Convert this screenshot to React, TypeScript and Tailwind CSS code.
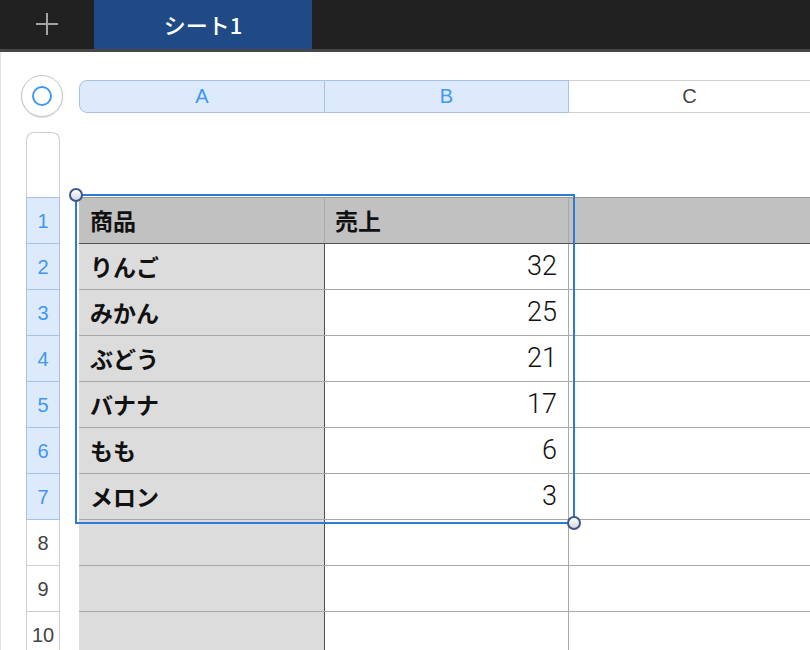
type Row = { n: number; name: string; value: string };

const rows: Row[] = [
  { n: 2, name: "りんご", value: "32" },
  { n: 3, name: "みかん", value: "25" },
  { n: 4, name: "ぶどう", value: "21" },
  { n: 5, name: "バナナ", value: "17" },
  { n: 6, name: "もも", value: "6" },
  { n: 7, name: "メロン", value: "3" },
  { n: 8, name: "", value: "" },
  { n: 9, name: "", value: "" },
  { n: 10, name: "", value: "" },
];

function RowHeader({ n }: { n: number }) {
  const selected = n <= 7;
  return (
    <div
      className={`h-[46px] shrink-0 flex items-center justify-center border-x border-b text-[20px] ${
        selected
          ? "bg-[#dceafb] border-[#a9c0de] text-[#3f98f2]"
          : "bg-white border-[#cfcfcf] text-[#444]"
      }`}
    >
      {n}
    </div>
  );
}

export default function App() {
  return (
    <div className="h-[650px] w-[810px] overflow-hidden bg-white font-['Liberation_Sans','Noto_Sans_CJK_JP',sans-serif]">
      {/* sheet tabs */}
      <div className="flex h-[52px] bg-[#212121] border-b-[3px] border-[#474747]">
        <div className="w-[94px] flex items-center justify-center pb-[2px]">
          <svg width="24" height="24" viewBox="0 0 24 24" className="text-[#a3a3a3]">
            <path d="M12 1v22M1 12h22" stroke="currentColor" strokeWidth="2" />
          </svg>
        </div>
        <div className="w-[218px] bg-[#1f4a86] flex items-center justify-center text-white text-[22px] font-medium font-['Noto_Sans_CJK_JP',sans-serif]">
          シート1
        </div>
      </div>

      <div className="relative border-l border-[#e2e2e2] pt-[23px]">
        {/* column headers */}
        <div className="flex items-center h-[42px]">
          <div className="ml-[20px] mr-[16px] w-[42px] h-[42px] shrink-0 rounded-full border border-[#c4c4c4] bg-white shadow-[0_1px_1px_rgba(0,0,0,0.12)] flex items-center justify-center">
            <div className="w-[20px] h-[20px] rounded-full border-2 border-[#3f98f2]" />
          </div>
          <div className="flex-1 flex h-[33px] text-[20px]">
            <div className="w-[246px] shrink-0 rounded-l-[8px] bg-[#dceafb] border border-[#a9c0de] text-[#3f98f2] flex items-center justify-center">
              A
            </div>
            <div className="w-[244px] shrink-0 bg-[#dceafb] border-y border-r border-[#a9c0de] text-[#3f98f2] flex items-center justify-center">
              B
            </div>
            <div className="flex-1 bg-white border-y border-[#cfcfcf] text-[#444] flex items-center justify-center">
              C
            </div>
          </div>
        </div>

        <div className="flex mt-[15px]">
          {/* row headers */}
          <div className="ml-[25px] w-[34px] shrink-0 flex flex-col">
            <div className="h-[66px] rounded-t-[8px] border-x border-t border-[#cfcfcf] border-b border-b-[#a9c0de]" />
            <RowHeader n={1} />
            {rows.map((r) => (
              <RowHeader key={r.n} n={r.n} />
            ))}
          </div>

          {/* table */}
          <div className="ml-[19px] flex-1 pt-[65px] font-['Noto_Sans_CJK_JP',sans-serif]">
            <div className="flex h-[47px] bg-[#c0c1c0] border-t border-[#9a9a9a] border-b border-b-[#505050] text-[23px] font-bold text-[#111]">
              <div className="w-[246px] shrink-0 border-r border-[#a8a8a8] flex items-center pl-[11px]">
                商品
              </div>
              <div className="w-[244px] shrink-0 border-r border-[#a8a8a8] flex items-center pl-[10px]">
                売上
              </div>
              <div className="flex-1" />
            </div>
            {rows.map((r) => (
              <div key={r.n} className="flex h-[46px] border-b border-[#a8a8a8]">
                <div className="w-[246px] shrink-0 bg-[#dcdcdc] border-r border-[#505050] flex items-center pl-[11px] text-[23px] font-bold text-[#111]">
                  {r.name}
                </div>
                <div className="w-[244px] shrink-0 border-r border-[#a8a8a8] flex items-center justify-end pr-[11px] text-[27px] font-light text-[#111] font-['Roboto',sans-serif]">
                  {r.value}
                </div>
                <div className="flex-1" />
              </div>
            ))}
          </div>
        </div>

        {/* selection */}
        <div className="absolute left-[74px] top-[142px] w-[500px] h-[330px] border-2 border-[#2d7bd4] pointer-events-none">
          <div className="absolute -left-[8px] -top-[8px] w-[14px] h-[14px] rounded-full border-2 border-[#3b5791] bg-gradient-to-b from-white to-[#d8d8d8]" />
          <div className="absolute -right-[8px] -bottom-[8px] w-[14px] h-[14px] rounded-full border-2 border-[#3b5791] bg-gradient-to-b from-white to-[#d8d8d8]" />
        </div>
      </div>
    </div>
  );
}
